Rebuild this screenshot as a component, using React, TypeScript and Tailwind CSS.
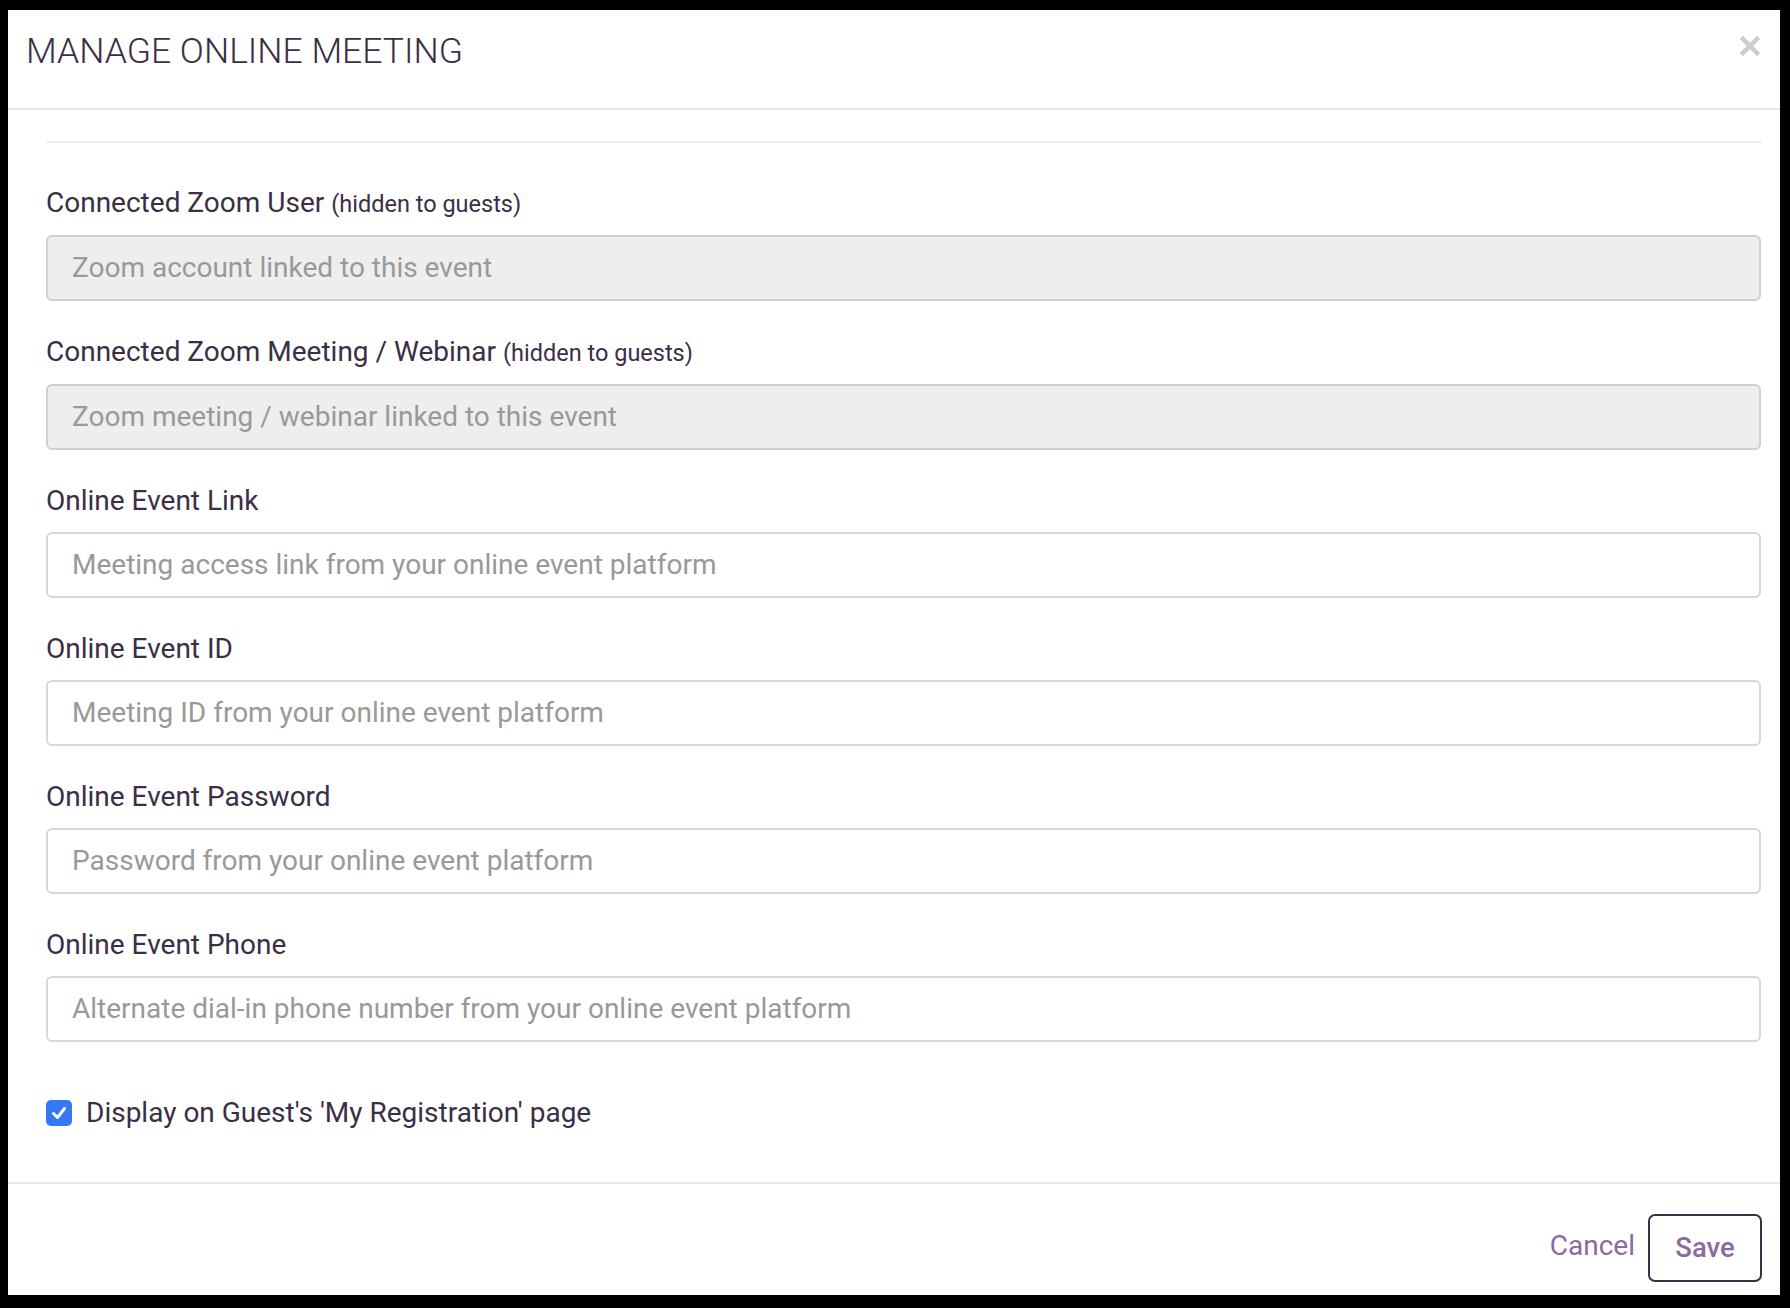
import React from 'react';

const fields = [
  { label: 'Connected Zoom User', note: '(hidden to guests)', placeholder: 'Zoom account linked to this event', disabled: true },
  { label: 'Connected Zoom Meeting / Webinar', note: '(hidden to guests)', placeholder: 'Zoom meeting / webinar linked to this event', disabled: true },
  { label: 'Online Event Link', placeholder: 'Meeting access link from your online event platform' },
  { label: 'Online Event ID', placeholder: 'Meeting ID from your online event platform' },
  { label: 'Online Event Password', placeholder: 'Password from your online event platform' },
  { label: 'Online Event Phone', placeholder: 'Alternate dial-in phone number from your online event platform' },
];

function Field({ label, note, placeholder, disabled }: { label: string; note?: string; placeholder: string; disabled?: boolean }) {
  return (
    <div className="flex flex-col">
      <label className="mb-[16px] text-[28px] leading-[30px] text-[#3b2e45]">
        {label}
        {note && <span className="ml-[7px] text-[23.5px]">{note}</span>}
      </label>
      <div
        className={
          disabled
            ? 'flex h-[66px] items-center rounded-[6px] border-2 border-[#d0d0d0] bg-[#eeeeee] pl-[24px] text-[28px] text-[#999999]'
            : 'flex h-[66px] items-center rounded-[6px] border-2 border-[#d8d8d8] bg-white pl-[24px] text-[28px] text-[#999999]'
        }
      >
        {placeholder}
      </div>
    </div>
  );
}

export default function App() {
  return (
    <div
      className="flex h-[1308px] w-[1790px] bg-black pb-[13px] pl-[8px] pr-[10px] pt-[10px]"
      style={{ fontFamily: 'Roboto, "Liberation Sans", sans-serif' }}
    >
      <div className="flex flex-1 flex-col bg-white">
        {/* header */}
        <div className="flex h-[100px] items-start justify-between border-b-2 border-[#e6e6e6] pl-[18px] pr-[20px]">
          <h1 className="mt-[21px] text-[35.5px] font-light leading-[40px] text-[#3b2e45]">MANAGE ONLINE MEETING</h1>
          <svg width="20" height="20" viewBox="0 0 20 20" className="mt-[26px]">
            <path d="M3 3L17 17M17 3L3 17" stroke="#cccccc" strokeWidth="4.5" strokeLinecap="square" />
          </svg>
        </div>

        {/* body */}
        <div className="flex flex-1 flex-col pl-[38px] pr-[18px] pt-[31px]">
          <div className="h-[2px] bg-[#eeeeee]" />
          <div className="mt-[45px] flex flex-col gap-[36px] pr-[1px]">
            {fields.map((f) => (
              <Field key={f.label} {...f} />
            ))}
          </div>
          <div className="mt-[56px] flex items-center gap-[14px]">
            <div className="flex h-[26px] w-[26px] items-center justify-center rounded-[5px] bg-[#3478f6]">
              <svg width="18" height="18" viewBox="0 0 18 18">
                <path d="M3.5 9.5L7.5 13.5L14.5 4.5" fill="none" stroke="white" strokeWidth="3" strokeLinecap="round" strokeLinejoin="round" />
              </svg>
            </div>
            <span className="text-[28px] leading-[30px] text-[#3b2e45]">Display on Guest's 'My Registration' page</span>
          </div>
        </div>

        {/* footer */}
        <div className="flex h-[113px] items-start justify-end gap-[13px] border-t-2 border-[#e6e6e6] pr-[18px] pt-[30px]">
          <button className="mt-[15px] text-[28px] leading-[34px] text-[#8b6b9e]">Cancel</button>
          <button className="flex h-[68px] w-[114px] items-center justify-center rounded-[7px] border-2 border-[#3b2e45] text-[27.5px] font-medium text-[#8b6b9e]">
            Save
          </button>
        </div>
      </div>
    </div>
  );
}
